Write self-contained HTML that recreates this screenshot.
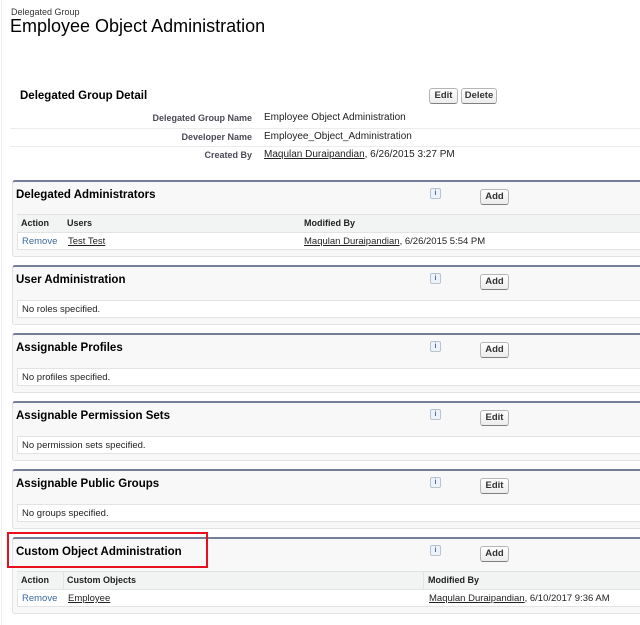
<!DOCTYPE html><html><head><style>
body{margin:0;width:640px;height:625px;background:#fff;font-family:"Liberation Sans",Arial,sans-serif;position:relative;overflow:hidden;color:#222}
.a{position:absolute;white-space:nowrap}
.s{font-size:9px}
.blk{position:absolute;left:12px;width:640px;background:#f8f8f8;border:1px solid #e0e3e5;border-top:2px solid #747e96;border-radius:3px 0 0 3px}
.t{position:absolute;left:3px;font-weight:bold;font-size:11.5px;color:#000}
.ic{position:absolute;left:417px;width:9px;height:9px;border:1px solid #b8c4d0;background:#eef3fa;border-radius:2px;font-size:7px;font-weight:bold;color:#4466aa;text-align:center;line-height:9px}
.btn{position:absolute;height:14px;border:1px solid #b5b5b5;border-bottom-color:#7f7f7f;border-radius:3px;background:linear-gradient(#fff,#ececec);font-size:9.5px;font-weight:bold;text-align:center;line-height:14px;color:#333}
.row{position:absolute;left:4px;width:640px;height:16px;background:#fff;border:1px solid #e3e3e3;border-right:none;font-size:9.5px}
.hd{position:absolute;left:4px;width:640px;height:17px;background:#f2f3f3;border-top:1px solid #e3e3e3;font-size:9px;font-weight:bold}
.c{position:absolute;top:3px;white-space:nowrap}
u{text-decoration:underline}
.lnk{color:#3a6a9e}
</style></head><body>
<div style="position:absolute;left:1px;top:0;width:1px;height:625px;background:#eee"></div>
<div class="a" style="left:11px;top:7px;font-size:9px;color:#333">Delegated Group</div>
<div class="a" style="left:10px;top:16px;font-size:18px;color:#000">Employee Object Administration</div>
<div class="a" style="left:20px;top:90px;font-size:11.5px;font-weight:bold;color:#000">Delegated Group Detail</div>
<div class="btn" style="left:429px;top:88px;width:27px">Edit</div>
<div class="btn" style="left:461px;top:88px;width:34px">Delete</div>
<div class="a s" style="right:388px;top:113px;font-weight:bold;color:#4a4a56">Delegated Group Name</div>
<div class="a" style="left:264px;top:112px;font-size:10px">Employee Object Administration</div>
<div style="position:absolute;left:10px;top:128px;width:630px;height:1px;background:#ececec"></div>
<div class="a s" style="right:388px;top:132px;font-weight:bold;color:#4a4a56">Developer Name</div>
<div class="a" style="left:264px;top:131px;font-size:10px">Employee_Object_Administration</div>
<div style="position:absolute;left:10px;top:146px;width:630px;height:1px;background:#ececec"></div>
<div class="a s" style="right:388px;top:150px;font-weight:bold;color:#4a4a56">Created By</div>
<div class="a" style="left:264px;top:149px;font-size:10px"><u>Maqulan Duraipandian</u>, 6/26/2015 3:27 PM</div>

<div class="blk" style="top:180px;height:74px">
<div class="t" style="top:7px">Delegated Administrators</div>
<div class="ic" style="top:6px">i</div>
<div class="btn" style="left:467px;top:7px;width:27px">Add</div>
<div class="hd" style="top:32px"><span class="c" style="left:4px">Action</span><span class="c" style="left:50px">Users</span><span class="c" style="left:287px">Modified By</span></div>
<div class="row" style="top:50px"><span class="c lnk" style="left:4px">Remove</span><span class="c" style="left:50px"><u>Test Test</u></span><span class="c" style="left:286px"><u>Maqulan Duraipandian</u>, 6/26/2015 5:54 PM</span></div>
</div>

<div class="blk" style="top:265px;height:57px">
<div class="t" style="top:7px">User Administration</div>
<div class="ic" style="top:6px">i</div>
<div class="btn" style="left:467px;top:7px;width:27px">Add</div>
<div class="row" style="top:33px"><span class="c" style="left:4px">No roles specified.</span></div>
</div>

<div class="blk" style="top:333px;height:57px">
<div class="t" style="top:7px">Assignable Profiles</div>
<div class="ic" style="top:6px">i</div>
<div class="btn" style="left:467px;top:7px;width:27px">Add</div>
<div class="row" style="top:33px"><span class="c" style="left:4px">No profiles specified.</span></div>
</div>

<div class="blk" style="top:401px;height:57px">
<div class="t" style="top:7px">Assignable Permission Sets</div>
<div class="ic" style="top:6px">i</div>
<div class="btn" style="left:467px;top:7px;width:27px">Edit</div>
<div class="row" style="top:33px"><span class="c" style="left:4px">No permission sets specified.</span></div>
</div>

<div class="blk" style="top:469px;height:57px">
<div class="t" style="top:7px">Assignable Public Groups</div>
<div class="ic" style="top:6px">i</div>
<div class="btn" style="left:467px;top:7px;width:27px">Edit</div>
<div class="row" style="top:33px"><span class="c" style="left:4px">No groups specified.</span></div>
</div>

<div class="blk" style="top:537px;height:74px">
<div class="t" style="top:7px">Custom Object Administration</div>
<div class="ic" style="top:6px">i</div>
<div class="btn" style="left:467px;top:7px;width:27px">Add</div>
<div class="hd" style="top:32px"><span class="c" style="left:4px">Action</span><span class="c" style="left:50px">Custom Objects</span><span class="c" style="left:411px">Modified By</span><span style="position:absolute;left:406px;top:0;width:1px;height:17px;background:#e3e3e3"></span><span style="position:absolute;left:46px;top:0;width:1px;height:17px;background:#e3e3e3"></span></div>
<div class="row" style="top:50px"><span class="c lnk" style="left:4px">Remove</span><span class="c" style="left:50px"><u>Employee</u></span><span class="c" style="left:411px"><u>Maqulan Duraipandian</u>, 6/10/2017 9:36 AM</span></div>
</div>
<div style="position:absolute;left:7px;top:532px;width:197px;height:32px;border:2px solid #e8101c"></div>
</body></html>
